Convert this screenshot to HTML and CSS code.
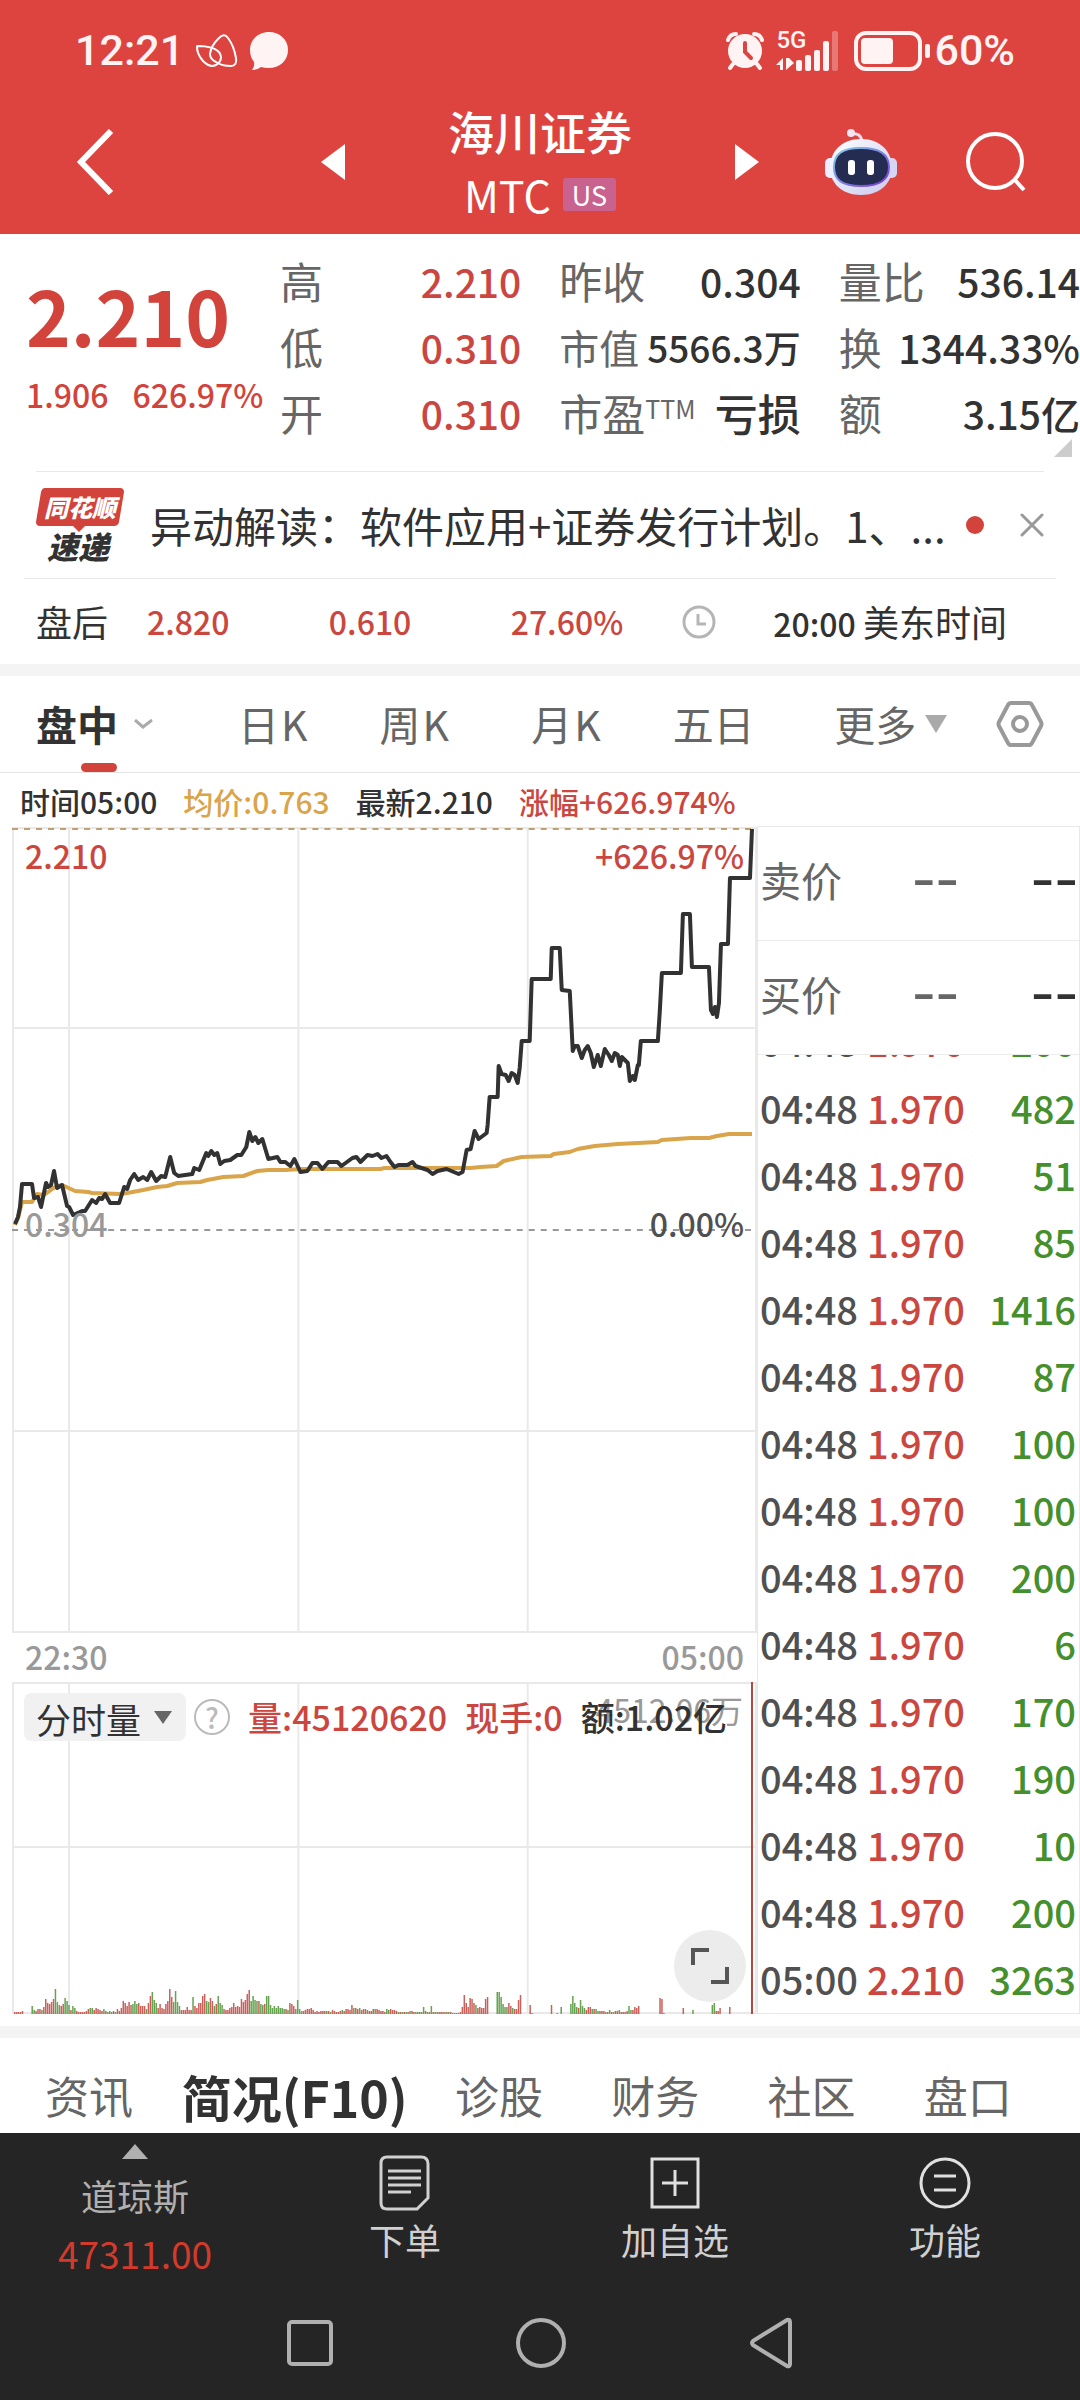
FILE: index.html
```html
<!DOCTYPE html>
<html lang="zh-CN">
<head>
    <meta charset="UTF-8">
    <meta name="viewport" content="width=device-width, initial-scale=1.0">
    <title>海川证券 MTC</title>
    <link rel="stylesheet" href="styles.css">
</head>
<body>
    <header class="top">
        <div class="status-bar">
            <div class="status-group">
                <span class="clock">12:21</span>
                <svg class="icon" width="42" height="34" viewBox="0 0 42 34" fill="none" stroke="#fff" stroke-width="2">
                    <path d="M1 13Q0 12 4 12Q24 13 25 23Q25 28 20 31Q14 34 7 27Q1 20 1 13Z"/>
                    <path d="M14 20Q15 12 22 5Q28-2 32 4Q38 12 40 24Q41 32 35 32Q26 32 20 28Q14 25 14 20Z"/>
                </svg>
                <svg class="icon" width="38" height="40" viewBox="0 0 38 40" fill="#fff3f3">
                    <path d="M19 1C29 1 38 8 38 19S29 37 19 37Q14 37 11 36Q7 39 2 39Q5 35 4 31Q0 26 0 19C0 8 9 1 19 1Z"/>
                </svg>
            </div>
            <div class="status-group">
                <svg class="icon" width="38" height="40" viewBox="0 0 38 40">
                    <g fill="none" stroke="#fff3f3" stroke-width="4" stroke-linecap="round">
                        <path d="M2 9Q4 3 10 3M36 9Q34 3 28 3M7 33L4 37M31 33L34 37"/>
                    </g>
                    <circle cx="19" cy="20" r="17" fill="#fff3f3"/>
                    <path d="M19 12V21L25 27" fill="none" stroke="#dd4440" stroke-width="4" stroke-linecap="round"/>
                </svg>
                <div class="signal">
                    <span class="signal-label">5G</span>
                    <svg width="64" height="40" viewBox="0 0 64 40" fill="#fff3f3">
                        <path d="M7 27V39H4V34H0ZM10 27V39L18 32L13 27Z"/>
                        <rect x="20" y="29" width="6" height="11" rx="2"/>
                        <rect x="29" y="24" width="6" height="16" rx="2"/>
                        <rect x="38" y="19" width="6" height="21" rx="2"/>
                        <rect x="47" y="10" width="6" height="30" rx="2"/>
                        <rect x="56" y="0" width="6" height="40" rx="2" opacity="0.3"/>
                    </svg>
                </div>
                <svg class="icon" width="76" height="40" viewBox="0 0 76 40">
                    <rect x="2" y="2" width="64" height="36" rx="10" fill="none" stroke="#fff3f3" stroke-width="4"/>
                    <rect x="7" y="7" width="32" height="26" rx="4" fill="#fff3f3"/>
                    <rect x="71" y="13" width="5" height="14" rx="2" fill="#fff3f3"/>
                </svg>
                <span class="battery">60%</span>
            </div>
        </div>

        <div class="title-bar">
            <div class="title-left">
                <button class="icon-button" aria-label="返回">
                    <svg width="38" height="66" viewBox="0 0 38 66" fill="none" stroke="#fff" stroke-width="6"><path d="M35 2L5 33L35 64"/></svg>
                </button>
            </div>
            <div class="title-center">
                <button class="icon-button" aria-label="上一只">
                    <svg width="24" height="36" viewBox="0 0 24 36" fill="#fff"><path d="M24 0V36L0 18Z"/></svg>
                </button>
                <div class="title">
                    <h1>海川证券</h1>
                    <div class="code">MTC <span class="market">US</span></div>
                </div>
                <button class="icon-button" aria-label="下一只">
                    <svg width="24" height="36" viewBox="0 0 24 36" fill="#fff"><path d="M0 0V36L24 18Z"/></svg>
                </button>
            </div>
            <div class="title-right">
                <button class="icon-button" aria-label="智能助手">
                    <svg width="72" height="68" viewBox="0 0 72 68">
                        <defs>
                            <linearGradient id="shell" x1="0" y1="0" x2="1" y2="1">
                                <stop offset="0" stop-color="#fff"/>
                                <stop offset="1" stop-color="#c9c9f0"/>
                            </linearGradient>
                            <linearGradient id="rim" x1="0" y1="0" x2="1" y2="1">
                                <stop offset="0" stop-color="#7fd0e8"/>
                                <stop offset="1" stop-color="#7a35d8"/>
                            </linearGradient>
                        </defs>
                        <path d="M26 6Q36 4 37 14" fill="none" stroke="#f3dcea" stroke-width="3"/>
                        <circle cx="26" cy="5" r="4" fill="#f3e6f4"/>
                        <rect x="0" y="30" width="12" height="20" rx="5" fill="#eef"/>
                        <rect x="60" y="30" width="12" height="20" rx="5" fill="#d5d5f5"/>
                        <path d="M36 11C56 11 67 24 67 40S54 67 36 67S5 56 5 40S16 11 36 11Z" fill="url(#shell)"/>
                        <path d="M36 20C55 20 64 26 64 39S55 58 36 58S9 52 9 39S17 20 36 20Z" fill="#252c52" stroke="url(#rim)" stroke-width="2"/>
                        <rect x="23" y="32" width="7" height="15" rx="3" fill="#fff"/>
                        <rect x="42" y="32" width="7" height="15" rx="3" fill="#fff"/>
                    </svg>
                </button>
                <button class="icon-button" aria-label="搜索">
                    <svg width="60" height="60" viewBox="0 0 60 60" fill="none" stroke="#fff" stroke-width="4"><circle cx="29" cy="29" r="27"/><path d="M48 47L58 58"/></svg>
                </button>
            </div>
        </div>
    </header>

    <section class="quote">
        <div class="price">
            <div class="price-now">2.210</div>
            <div class="price-change"><span>1.906</span><span>626.97%</span></div>
        </div>
        <dl class="stats">
            <div><dt>高</dt><dd class="up">2.210</dd></div>
            <div><dt>昨收</dt><dd>0.304</dd></div>
            <div><dt>量比</dt><dd>536.14</dd></div>
            <div><dt>低</dt><dd class="up">0.310</dd></div>
            <div class="tight"><dt>市值</dt><dd>5566.3万</dd></div>
            <div><dt>换</dt><dd>1344.33%</dd></div>
            <div><dt>开</dt><dd class="up">0.310</dd></div>
            <div><dt>市盈<sup>TTM</sup></dt><dd class="word">亏损</dd></div>
            <div><dt>额</dt><dd>3.15亿</dd></div>
        </dl>
        <span class="corner"></span>
    </section>

    <section class="news">
        <svg class="news-logo" width="88" height="74" viewBox="0 0 88 74">
            <path d="M9 0H84Q88 0 88 4L83 34Q82 38 78 38H49L43 44L37 38H4Q0 38 0 34L5 4Q6 0 9 0Z" fill="#d2433c"/>
            <text x="44" y="29" class="logo-top">同花顺</text>
            <text x="42" y="71" class="logo-bottom">速递</text>
        </svg>
        <a class="headline" href="#">异动解读：软件应用+证券发行计划。1、...</a>
        <span class="dot"></span>
        <button class="icon-button" aria-label="关闭">
            <svg width="24" height="24" viewBox="0 0 24 24" stroke="#999" stroke-width="3" stroke-linecap="round"><path d="M2 2L22 22M22 2L2 22"/></svg>
        </button>
    </section>

    <section class="after-hours">
        <span class="label">盘后</span>
        <span class="up">2.820</span>
        <span class="up">0.610</span>
        <span class="up">27.60%</span>
        <svg width="34" height="34" viewBox="0 0 34 34" fill="none" stroke="#b5b5b5" stroke-width="3"><circle cx="17" cy="17" r="15"/><path d="M16 9V19H24"/></svg>
        <span class="time">20:00 <span class="label">美东时间</span></span>
    </section>

    <nav class="chart-tabs">
        <button class="active">盘中
            <svg width="19" height="10" viewBox="0 0 19 10" fill="none" stroke="#aaa" stroke-width="3"><path d="M1 1L9 8L18 1"/></svg>
        </button>
        <button>日<span>K</span></button>
        <button>周<span>K</span></button>
        <button>月<span>K</span></button>
        <button>五日</button>
        <button class="more">更多
            <svg width="22" height="18" viewBox="0 0 22 18" fill="#aaa"><path d="M0 0H22L11 18Z"/></svg>
        </button>
        <button aria-label="设置">
            <svg width="48" height="48" viewBox="0 0 48 48" fill="none" stroke="#999" stroke-width="4" stroke-linejoin="round"><path d="M15 3H33Q35 3 36 5L45 22Q46 24 45 26L36 43Q35 45 33 45H15Q13 45 12 43L3 26Q2 24 3 22L12 5Q13 3 15 3Z"/><circle cx="24" cy="24" r="7"/></svg>
        </button>
    </nav>

    <div class="legend">
        <span>时间05:00</span>
        <span class="gold">均价:0.763</span>
        <span>最新2.210</span>
        <span class="up">涨幅+626.974%</span>
    </div>

    <main class="market-data">
        <div class="charts">
            <div class="price-chart">
                <svg class="plot" viewBox="12 827 744 806" preserveAspectRatio="none" fill="none">
                    <g stroke="#e9e9e9" stroke-width="2">
                        <path d="M13 827V1633M69 827V1633M298 827V1633M527 827V1633M755 827V1633"/>
                        <path d="M12 828H756M12 1028H756M12 1431H756M12 1632H756"/>
                    </g>
                    <path d="M12 829H756" stroke="#c0a070" stroke-width="2" stroke-dasharray="6 6"/>
                    <path d="M12 1230H756" stroke="#999" stroke-width="2" stroke-dasharray="6 6"/>
                    <polyline stroke="#d9a44a" stroke-width="4" stroke-linejoin="round" points="15,1225 18,1218 22,1202 32,1202 37,1194 44,1195 55,1187 62,1185 75,1191 88,1192 92,1193 120,1194 127,1193 143,1190 157,1187 167,1186 177,1183 200,1182 207,1180 223,1177 243,1176 257,1171 268,1170 285,1170 300,1169 380,1169 384,1168 470,1168 480,1167 496,1166 503,1161 521,1157 550,1156 553,1154 569,1152 577,1149 594,1146 617,1144 657,1142 661,1140 690,1138 708,1138 716,1136 728,1134 751,1134"/>
                    <polyline stroke="#323232" stroke-width="4" stroke-linejoin="round" points="15,1224 18,1217 20,1207 22,1184 32,1184 34,1198 38,1197 41,1207 46,1183 48,1187 51,1185 54,1171 57,1188 62,1185 67,1206 69,1207 73,1215 82,1211 85,1211 92,1200 96,1203 99,1198 102,1199 105,1194 110,1203 119,1203 124,1187 127,1189 130,1180 134,1174 138,1180 143,1177 147,1180 151,1172 156,1181 161,1176 165,1177 170,1157 174,1173 178,1176 192,1174 194,1168 199,1170 206,1153 208,1156 211,1151 214,1155 217,1153 220,1164 224,1161 230,1160 237,1155 241,1155 246,1147 249,1132 252,1141 255,1137 258,1143 262,1139 268,1159 277,1157 280,1162 285,1162 290,1166 294,1159 300,1172 307,1171 312,1163 317,1163 322,1169 328,1162 337,1162 341,1166 352,1158 356,1157 360,1162 367,1155 372,1156 377,1154 381,1158 386,1156 390,1162 394,1167 398,1165 407,1165 412,1162 415,1166 427,1170 432,1174 437,1171 446,1169 458,1174 462,1172 466,1150 470,1149 474,1131 478,1139 486,1133 487,1125 489,1097 497,1097 498,1066 501,1074 505,1075 508,1081 511,1073 514,1075 517,1083 519,1068 521,1041 529,1041 531,979 550,979 551,948 559,948 561,990 569,991 572,1051 574,1046 577,1046 581,1058 584,1050 587,1046 590,1053 593,1067 597,1055 600,1066 604,1049 608,1055 611,1061 614,1053 617,1055 619,1066 621,1057 627,1063 629,1081 632,1076 634,1080 637,1065 638,1065 640,1041 657,1041 659,1010 661,973 680,973 682,914 689,914 691,967 708,967 710,1010 712,1014 714,1007 716,1017 718,1003 720,944 727,944 729,878 749,878 751,829"/>
                </svg>
                <div class="axis axis-top up"><span>2.210</span><span>+626.97%</span></div>
                <div class="axis axis-mid"><span>0.304</span><span class="zero">0.00%</span></div>
            </div>
            <div class="times"><span>22:30</span><span>05:00</span></div>
            <div class="volume-chart">
                <svg class="plot" viewBox="0 0 744 332" preserveAspectRatio="none" fill="none">
                    <path stroke="#e9e9e9" stroke-width="2" d="M1 0V332M57 0V332M286 0V332M515 0V332M743 0V332M0 1H744M0 165H744M0 331H744"/>
                    <g id="volumeBars"></g>
                    <path stroke="#b5473f" stroke-width="2" d="M739 0V332"/>
                </svg>
                <span class="volume-max">4512.06万</span>
                <div class="volume-head">
                    <div class="picker">
                        <select aria-label="副图指标"><option>分时量</option></select>
                        <svg width="18" height="13" viewBox="0 0 18 13" fill="#666"><path d="M0 0H18L9 13Z"/></svg>
                    </div>
                    <button class="help" aria-label="说明">?</button>
                    <span class="up">量:45120620</span>
                    <span class="up">现手:0</span>
                    <span>额:1.02亿</span>
                </div>
                <button class="expand" aria-label="全屏">
                    <svg width="38" height="38" viewBox="0 0 38 38" fill="none" stroke="#555" stroke-width="4"><path d="M2 18V3H18M36 20V35H20"/></svg>
                </button>
            </div>
        </div>

        <aside class="ticker">
            <div class="offer"><span>卖价</span><span class="dash">--</span><span class="dash dark">--</span></div>
            <div class="offer"><span>买价</span><span class="dash">--</span><span class="dash dark">--</span></div>
            <div class="trades">
                <table>
                    <tbody>
                        <tr><td>04:48</td><td>1.970</td><td>200</td></tr>
                        <tr><td>04:48</td><td>1.970</td><td>482</td></tr>
                        <tr><td>04:48</td><td>1.970</td><td>51</td></tr>
                        <tr><td>04:48</td><td>1.970</td><td>85</td></tr>
                        <tr><td>04:48</td><td>1.970</td><td>1416</td></tr>
                        <tr><td>04:48</td><td>1.970</td><td>87</td></tr>
                        <tr><td>04:48</td><td>1.970</td><td>100</td></tr>
                        <tr><td>04:48</td><td>1.970</td><td>100</td></tr>
                        <tr><td>04:48</td><td>1.970</td><td>200</td></tr>
                        <tr><td>04:48</td><td>1.970</td><td>6</td></tr>
                        <tr><td>04:48</td><td>1.970</td><td>170</td></tr>
                        <tr><td>04:48</td><td>1.970</td><td>190</td></tr>
                        <tr><td>04:48</td><td>1.970</td><td>10</td></tr>
                        <tr><td>04:48</td><td>1.970</td><td>200</td></tr>
                        <tr><td>05:00</td><td>2.210</td><td>3263</td></tr>
                    </tbody>
                </table>
            </div>
        </aside>
    </main>

    <nav class="info-tabs">
        <a href="#">资讯</a>
        <a href="#" class="active">简况(F10)</a>
        <a href="#">诊股</a>
        <a href="#">财务</a>
        <a href="#">社区</a>
        <a href="#">盘口</a>
    </nav>

    <footer class="bottom">
        <div class="actions">
            <button class="index">
                <svg width="26" height="15" viewBox="0 0 26 15" fill="#b0b0b0"><path d="M13 0L26 15H0Z"/></svg>
                <span>道琼斯</span>
                <span class="index-value">47311.00</span>
            </button>
            <button>
                <svg width="52" height="56" viewBox="0 0 52 56" fill="none" stroke="#d0d0d0" stroke-width="3"><path d="M8 2H42Q49 2 49 9V43L38 54H8Q2 54 2 48V8Q2 2 8 2Z"/><path d="M9 16H42M9 23H42M9 30H42M9 37H32"/></svg>
                <span>下单</span>
            </button>
            <button>
                <svg width="52" height="56" viewBox="0 0 52 56" fill="none" stroke="#e0e0e0" stroke-width="3"><path d="M3 4H49V52H3ZM13 28H39M26 15V41"/></svg>
                <span>加自选</span>
            </button>
            <button>
                <svg width="52" height="56" viewBox="0 0 52 56" fill="none" stroke="#e0e0e0" stroke-width="3"><circle cx="26" cy="28" r="24"/><path d="M15 21H37M15 35H37"/></svg>
                <span>功能</span>
            </button>
        </div>
        <div class="system-nav">
            <button class="icon-button" aria-label="最近任务"><svg width="46" height="46" viewBox="0 0 46 46" fill="none" stroke="#b0b0b0" stroke-width="4"><rect x="2" y="2" width="42" height="42" rx="3"/></svg></button>
            <button class="icon-button" aria-label="主页"><svg width="52" height="52" viewBox="0 0 52 52" fill="none" stroke="#b0b0b0" stroke-width="4"><circle cx="26" cy="26" r="23"/></svg></button>
            <button class="icon-button" aria-label="后退"><svg width="44" height="52" viewBox="0 0 44 52" fill="none" stroke="#b0b0b0" stroke-width="4" stroke-linejoin="round"><path d="M41 5V47Q41 50 38 49L4 28Q2 26 4 24L38 3Q41 2 41 5Z"/></svg></button>
        </div>
    </footer>

    <script>
        // One value per minute, negative = falling minute (green)
        const volumes = [
            2, 2, 2, 2, 3, 0, 0, 0, 0, -8, -4, 3, 5, 5, -4, 7, 15, 11, 10, 12, 15, -25, -12, -9, 8, 10, -16, -13, -9, 4,
            -8, -6, 3, 2, 2, 2, 2, 3, 5, -6, -6, 4, 6, 5, 4, 3, -5, 3, -2, -3, -2, 3, -2, 5, 3, 6, 13, 11, 8, 12,
            9, -10, -13, -10, 11, 8, 8, 8, -5, 11, 18, -22, -14, -11, 6, 10, 6, 5, 10, 13, 25, 17, -12, -23, -12, -8, 4, 4, 4, 7,
            4, 4, -17, 8, 6, 11, 11, 18, 20, -13, -12, 16, 13, -8, 10, -18, -11, -9, 5, 4, 4, 6, 7, 11, 7, 8, 7, 15, 12, 14,
            20, 24, -13, -18, -14, -13, 13, -10, -9, 10, -18, -18, -9, -6, -8, -6, -8, -6, -6, -5, 5, -4, 11, 10, 8, -5, -14, -5, -3, 3,
            4, 5, 5, 6, 4, 2, 3, 2, 3, 3, 3, -3, 3, -2, 4, 3, 2, 2, 3, -4, 3, 5, 5, 4, 9, -6, 6, 5, -6, 4,
            5, 5, -4, 3, 3, 5, -5, 5, 4, 3, 3, 2, -5, -4, 5, 4, 4, 3, -2, 2, -2, 2, -2, 2, -3, 3, 2, -2, -2, 2,
            -2, -7, 3, -2, 2, -8, 2, -2, -2, 2, 2, 2, -2, 2, -2, 2, -1, 1, 1, 1, 2, 7, 19, 11, 7, 16, 15, 11, -9, 6,
            7, 6, 6, 15, 17, 0, 0, 0, 0, -22, -22, -17, -10, -7, -7, 11, 8, -6, 5, 5, 14, 19, 0, 0, 0, 0, 9, 1, 0, 0,
            0, 0, 0, 0, 0, 0, 0, 9, 0, 0, -1, 0, -7, 0, 0, 0, 0, -10, -18, -11, -7, 6, -14, -8, -6, 4, 7, 7, -5, 5,
            -5, -3, 3, 3, 3, -2, 2, -4, 2, -2, 3, 3, -4, 2, 2, 2, 3, -8, -4, 4, 7, 6, 8, 0, 0, 0, 0, 0, 0, 0,
            0, 0, 0, 16, 15, 1, 0, 0, 0, 0, 0, 0, 0, 0, 0, 6, 0, 0, 0, 0, -4, 0, 0, 0, 0, 0, 0, 0, 0, 0,
            -9, -11, 3, 3, 6, 0, 0, 0, 0, 7
        ];

        const barGroup = document.getElementById("volumeBars");
        const step = 716 / volumes.length;
        volumes.forEach(function(value, i) {
            const bar = document.createElementNS("http://www.w3.org/2000/svg", "rect");
            const height = Math.abs(value);
            bar.setAttribute("x", 2 + i * step);
            bar.setAttribute("y", 332 - height);
            bar.setAttribute("width", 1.5);
            bar.setAttribute("height", height);
            bar.setAttribute("class", value < 0 ? "bar-down" : "bar-up");
            barGroup.appendChild(bar);
        });
    </script>
</body>
</html>
```
FILE: styles.css
```css
* {
    box-sizing: border-box;
    margin: 0;
    padding: 0;
}
body {
    font-family: "Noto Sans CJK SC", sans-serif;
    font-size: 36px;
    line-height: 1.2;
    color: #323232;
    background: #fff;
}
button {
    font: inherit;
    color: inherit;
    background: none;
    border: none;
    cursor: pointer;
}
a {
    color: inherit;
    text-decoration: none;
}
svg {
    display: block;
    flex: none;
}
.up {
    color: #cb463f;
}
.gold {
    color: #d9a44a;
}
.icon-button {
    display: block;
    flex: none;
}

/* Header */
.top {
    background: #dd4440;
    color: #fff;
}
.status-bar {
    display: flex;
    justify-content: space-between;
    align-items: center;
    height: 98px;
    padding: 4px 65px 0 75px;
    font-family: Roboto, sans-serif;
    font-weight: 500;
    font-size: 43px;
    color: #fff3f3;
}
.status-group {
    display: flex;
    align-items: center;
    gap: 12px;
}
.signal {
    position: relative;
    margin-right: 2px;
}
.signal-label {
    position: absolute;
    top: -3px;
    left: 0;
    font-size: 24px;
    line-height: 24px;
}
.battery {
    margin-left: -8px;
}
.title-bar {
    display: grid;
    grid-template-columns: 1fr 438px 1fr;
    align-items: center;
    height: 136px;
    padding-bottom: 8px;
}
.title-left {
    padding-left: 76px;
}
.title-center {
    display: flex;
    justify-content: space-between;
    align-items: center;
}
.title {
    text-align: center;
}
.title h1 {
    font-size: 46px;
    font-weight: 500;
    line-height: 64px;
}
.code {
    display: flex;
    justify-content: center;
    align-items: center;
    gap: 12px;
    font-size: 43px;
    line-height: 64px;
}
.market {
    padding: 0 9px;
    font-size: 27px;
    line-height: 33px;
    background: #c9628f;
    border-radius: 3px;
}
.title-right {
    display: flex;
    justify-content: flex-end;
    align-items: center;
    gap: 69px;
    padding-right: 54px;
}

/* Quote */
.quote {
    position: relative;
    display: flex;
    height: 237px;
    padding-top: 14px;
}
.price {
    flex: none;
    width: 280px;
    padding: 18px 0 0 26px;
    color: #d2433c;
}
.price-now {
    font-size: 76px;
    line-height: 96px;
    font-weight: bold;
}
.price-change {
    display: flex;
    gap: 24px;
    font-size: 32px;
    line-height: 64px;
    font-weight: 500;
}
.stats {
    flex: 1;
    display: grid;
    grid-template-columns: repeat(3, minmax(0, 1fr));
    grid-auto-rows: 66px;
    column-gap: 38px;
}
.stats div {
    display: flex;
    justify-content: space-between;
    align-items: center;
    white-space: nowrap;
}
.stats dt {
    font-size: 43px;
    color: #666;
}
.stats dd {
    font-size: 39px;
    font-weight: 500;
}
.stats .word {
    font-size: 43px;
}
.stats sup {
    font-size: 25px;
    line-height: 1;
    vertical-align: 12px;
}
.stats .tight dt {
    font-size: 40px;
}
.stats .tight dd {
    font-size: 37px;
}
.corner {
    position: absolute;
    right: 8px;
    bottom: 14px;
    border-left: 18px solid transparent;
    border-bottom: 18px solid #ccc;
}

/* News and after-hours rows */
.news {
    display: flex;
    align-items: center;
    height: 107px;
    margin: 0 36px;
    border-top: 1px solid #e8e8e8;
}
.news-logo {
    overflow: visible;
}
.logo-top, .logo-bottom {
    font-family: "Noto Sans CJK SC", sans-serif;
    font-style: italic;
    font-weight: 900;
    text-anchor: middle;
}
.logo-top {
    font-size: 24px;
    fill: #fff;
}
.logo-bottom {
    font-size: 31px;
    fill: #323232;
}
.headline {
    flex: 1;
    margin-left: 26px;
    font-size: 42px;
    line-height: 64px;
    white-space: nowrap;
}
.dot {
    width: 18px;
    height: 18px;
    margin: 0 36px 0 20px;
    border-radius: 50%;
    background: #d2433c;
}
.after-hours {
    display: grid;
    grid-template-columns: 11fr 18fr 18fr 17fr 9fr 28fr;
    align-items: center;
    height: 86px;
    margin: 0 24px;
    padding-left: 12px;
    border-top: 1px solid #e8e8e8;
    font-size: 32px;
    font-weight: 500;
}
.after-hours .label {
    font-size: 36px;
    font-weight: normal;
}

/* Chart tabs */
.chart-tabs {
    display: grid;
    grid-template-columns: 20fr 14fr 15fr 14fr 16fr 16fr auto;
    align-items: center;
    height: 109px;
    padding: 0 36px;
    border-top: 12px solid #f4f4f4;
    border-bottom: 1px solid #e3e3e3;
    font-size: 41px;
    color: #666;
}
.chart-tabs button {
    display: flex;
    align-items: center;
    justify-self: start;
    gap: 2px;
    height: 96px;
}
.chart-tabs .more {
    gap: 9px;
}
.chart-tabs .active {
    position: relative;
    gap: 16px;
    font-weight: bold;
    color: #323232;
}
.chart-tabs .active::after {
    content: "";
    position: absolute;
    bottom: 0;
    left: 50%;
    width: 36px;
    height: 9px;
    margin-left: -14px;
    border-radius: 5px;
    background: #d2433c;
}
.legend {
    display: flex;
    align-items: center;
    gap: 26px;
    height: 54px;
    padding: 2px 20px 0;
    font-size: 30px;
    font-weight: 500;
    white-space: nowrap;
}

/* Charts */
.market-data {
    display: grid;
    grid-template-columns: 757fr 323fr;
    padding-bottom: 12px;
}
.charts {
    padding-left: 12px;
}
.plot {
    position: absolute;
    inset: 0;
    width: 100%;
    height: 100%;
}
.price-chart {
    position: relative;
    height: 806px;
}
.axis {
    position: absolute;
    left: 0;
    right: 0;
    display: flex;
    justify-content: space-between;
    padding: 0 13px;
    font-size: 32px;
    font-weight: 500;
    line-height: 40px;
}
.axis-top {
    top: 8px;
}
.axis-mid {
    top: 376px;
    color: #999;
}
.zero {
    color: #505050;
}
.times {
    display: flex;
    justify-content: space-between;
    align-items: center;
    height: 49px;
    padding: 0 13px 2px;
    font-size: 32px;
    font-weight: 500;
    color: #999;
}
.volume-chart {
    position: relative;
    height: 332px;
}
.bar-up {
    fill: #c9615b;
}
.bar-down {
    fill: #65a350;
}
.volume-max {
    position: absolute;
    top: 8px;
    right: 14px;
    font-size: 32px;
    color: #999;
}
.volume-head {
    position: relative;
    display: flex;
    align-items: center;
    gap: 18px;
    padding: 11px 0 0 12px;
    font-size: 34px;
    font-weight: 500;
    white-space: nowrap;
}
.picker {
    position: relative;
    height: 48px;
    margin-right: -10px;
}
.picker select {
    width: 162px;
    height: 48px;
    padding: 0 0 3px 12px;
    font-family: "Noto Sans CJK SC", sans-serif;
    font-size: 35px;
    color: #323232;
    background: #f1f1f1;
    border: none;
    border-radius: 8px;
    appearance: none;
}
.picker svg {
    position: absolute;
    top: 18px;
    right: 14px;
    pointer-events: none;
}
.help {
    width: 36px;
    height: 36px;
    border: 2px solid #bbb;
    border-radius: 50%;
    font-size: 28px;
    line-height: 32px;
    color: #bbb;
}
.expand {
    position: absolute;
    right: 11px;
    bottom: 12px;
    display: flex;
    align-items: center;
    justify-content: center;
    width: 72px;
    height: 72px;
    border-radius: 50%;
    background: #ececec;
}

/* Ticker */
.ticker {
    display: flex;
    flex-direction: column;
    height: 1188px;
    margin-top: -1px;
    border: 1px solid #e8e8e8;
}
.offer {
    display: grid;
    grid-template-columns: 152px 1fr auto;
    align-items: center;
    height: 114px;
    padding: 0 1px 8px 2px;
    border-bottom: 1px solid #ececec;
    font-size: 41px;
    color: #666;
}
.dash {
    padding-bottom: 14px;
    font-size: 68px;
    line-height: 48px;
}
.dark {
    color: #323232;
}
.trades {
    flex: 1;
    display: flex;
    align-items: flex-end;
    min-height: 0;
    overflow: hidden;
}
.trades table {
    width: 100%;
    border-collapse: collapse;
    font-size: 38px;
    font-weight: 500;
}
.trades td {
    height: 67px;
    line-height: 64px;
    padding-bottom: 2px;
    text-align: right;
    color: #45902d;
}
.trades td:first-child {
    width: 100px;
    padding-left: 2px;
    text-align: left;
    color: #505050;
}
.trades td:nth-child(2) {
    width: 107px;
    color: #cb463f;
}
.trades td:last-child {
    padding-right: 3px;
}

/* Info tabs */
.info-tabs {
    display: grid;
    grid-template-columns: 14fr 28fr 16fr 16fr 16fr 16fr;
    align-items: center;
    height: 107px;
    padding: 20px 0 0 45px;
    border-top: 12px solid #f4f4f4;
    font-size: 44px;
    color: #666;
    white-space: nowrap;
}
.info-tabs .active {
    font-size: 50px;
    font-weight: bold;
    color: #323232;
}

/* Bottom bars */
.bottom {
    background: #252525;
    color: #d0d0d0;
}
.actions {
    display: grid;
    grid-template-columns: repeat(4, 1fr);
    height: 153px;
}
.actions button {
    display: flex;
    flex-direction: column;
    align-items: center;
    gap: 6px;
    padding-top: 22px;
    line-height: 44px;
}
.actions .index {
    gap: 14px;
    padding-top: 11px;
    color: #b0b0b0;
}
.index-value {
    font-size: 37px;
    color: #d23a2c;
}
.system-nav {
    display: flex;
    justify-content: center;
    align-items: center;
    gap: 182px;
    height: 114px;
}
```
